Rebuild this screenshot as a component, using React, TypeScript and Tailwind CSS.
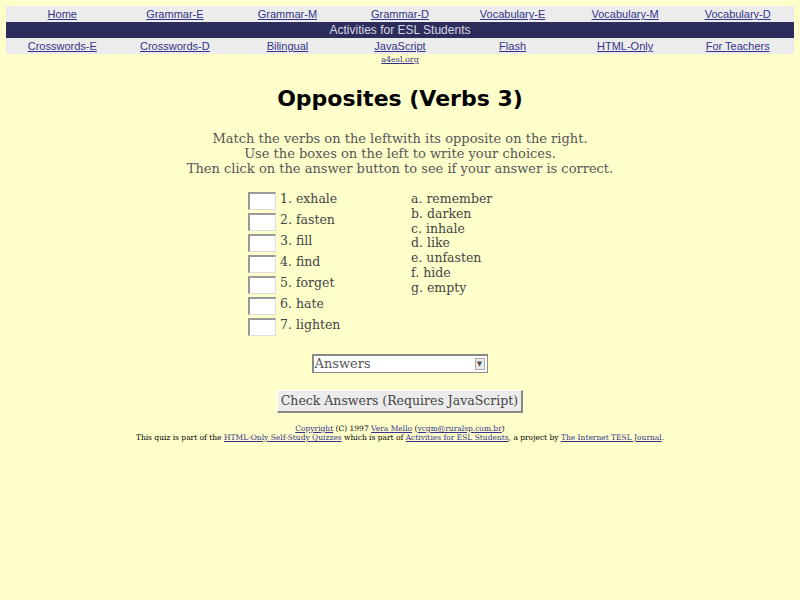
import React from "react";

const row1 = ["Home", "Grammar-E", "Grammar-M", "Grammar-D", "Vocabulary-E", "Vocabulary-M", "Vocabulary-D"];
const row3 = ["Crosswords-E", "Crosswords-D", "Bilingual", "JavaScript", "Flash", "HTML-Only", "For Teachers"];
const left = ["1. exhale", "2. fasten", "3. fill", "4. find", "5. forget", "6. hate", "7. lighten"];
const right = ["a. remember", "b. darken", "c. inhale", "d. like", "e. unfasten", "f. hide", "g. empty"];

export default function App() {
  return (
    <div className="min-h-[600px] w-[800px] bg-[#ffffcc] pt-[6px]" style={{ fontFamily: '"DejaVu Serif", serif' }}>
      <div className="mx-[6px]" style={{ fontFamily: '"Liberation Sans", Arial, sans-serif' }}>
        <div className="grid grid-cols-7 bg-[#ececec] h-[16px] items-center text-[11px]">
          {row1.map((t) => (
            <div key={t} className="text-center">
              <a className="text-[#33338a] underline">{t}</a>
            </div>
          ))}
        </div>
        <div className="bg-[#2d2d5c] h-[16px] flex items-center justify-center text-[12px] text-[#d8d8e8]">
          Activities for ESL Students
        </div>
        <div className="grid grid-cols-7 bg-[#ececec] h-[16px] items-center text-[11px]">
          {row3.map((t) => (
            <div key={t} className="text-center">
              <a className="text-[#33338a] underline">{t}</a>
            </div>
          ))}
        </div>
        <div className="text-center text-[8px] leading-[10px] mt-[1px]" style={{ fontFamily: '"DejaVu Serif", serif' }}>
          <a className="text-[#33338a] underline">a4esl.org</a>
        </div>
      </div>

      <h1
        className="text-center text-[22px] font-bold text-black mt-[19px] leading-[30px]"
        style={{ fontFamily: '"DejaVu Sans", sans-serif' }}
      >
        Opposites (Verbs 3)
      </h1>

      <div className="text-center text-[13px] leading-[15px] text-[#555] mt-[17px]">
        <div>Match the verbs on the leftwith its opposite on the right.</div>
        <div>Use the boxes on the left to write your choices.</div>
        <div>Then click on the answer button to see if your answer is correct.</div>
      </div>

      <div className="flex mt-[16px] ml-[248px] text-[12.5px] text-[#444]">
        <div className="w-[163px] flex flex-col gap-[3px]">
          {left.map((t) => (
            <div key={t} className="flex items-start h-[18px]">
              <div className="w-[28px] h-[18px] bg-white border-t-2 border-l-2 border-[#999] border-r border-b border-r-[#ddd] border-b-[#ddd] mr-[4px]" />
              <span className="leading-[15px] -mt-[1px]">{t}</span>
            </div>
          ))}
        </div>
        <div className="flex flex-col leading-[14.8px]">
          {right.map((t) => (
            <div key={t}>{t}</div>
          ))}
        </div>
      </div>

      <div className="flex justify-center mt-[18px] ml-[-1px]">
        <div className="w-[176px] h-[19px] bg-white border border-[#888] border-t-2 border-l-2 flex items-center justify-between text-[13px] text-[#555] pl-[1px] pr-[2px]">
          <span>Answers</span>
          <span className="w-[10px] h-[12px] bg-[#eee] border border-[#aaa] flex items-center justify-center text-[7px] leading-none">▼</span>
        </div>
      </div>

      <div className="flex justify-center mt-[17px]">
        <div className="h-[23px] px-[3px] bg-[#ececec] border-r-2 border-b-2 border-[#888] border-t border-l border-t-[#fff] border-l-[#fff] flex items-center text-[12.5px] text-[#444]">
          Check Answers (Requires JavaScript)
        </div>
      </div>

      <div className="text-center text-[7.5px] leading-[9px] text-black mt-[11px]">
        <div>
          <a className="text-[#33338a] underline">Copyright</a> (C) 1997{" "}
          <a className="text-[#33338a] underline">Vera Mello</a> (
          <a className="text-[#33338a] underline">vcgm@ruralsp.com.br</a>)
        </div>
        <div>
          This quiz is part of the <a className="text-[#33338a] underline">HTML-Only Self-Study Quizzes</a> which is part of{" "}
          <a className="text-[#33338a] underline">Activities for ESL Students</a>, a project by{" "}
          <a className="text-[#33338a] underline">The Internet TESL Journal</a>.
        </div>
      </div>
    </div>
  );
}
